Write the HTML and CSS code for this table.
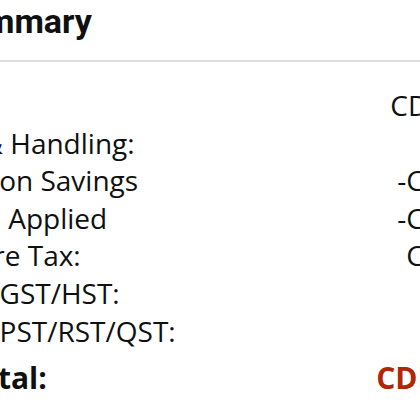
FILE: index.html
```html
<!DOCTYPE html>
<html lang="en">
<head>
<meta charset="utf-8">
<title>Order Summary</title>
<link rel="stylesheet" href="styles.css">
</head>
<body>
<section class="summary">
  <h2 class="title">Order Summary</h2>
  <div class="rows">
    <div class="row"><span class="label">Items:</span><span class="value">CDN$ 17.97</span></div>
    <div class="row"><span class="label">Shipping &amp; Handling:</span><span class="value">FREE</span></div>
    <div class="row"><span class="label">Your Coupon Savings</span><span class="value">-CDN$ 5.00</span></div>
    <div class="row"><span class="label">Promotion Applied</span><span class="value">-CDN$ 3.00</span></div>
    <div class="row"><span class="label">Total before Tax:</span><span class="value">CDN$ 9.97</span></div>
    <div class="row"><span class="label">Estimated GST/HST:</span><span class="value">$1.30</span></div>
    <div class="row"><span class="label">Estimated PST/RST/QST:</span><span class="value">$0.00</span></div>
    <div class="row total"><span class="label">Grand Total:</span><span class="value">CDN$ 11.27</span></div>
  </div>
</section>
</body>
</html>
```
FILE: styles.css
```css
html, body {
  margin: 0;
  padding: 0;
  background: #ffffff;
}
body {
  width: 420px;
  height: 420px;
  overflow: hidden;
  font-family: "Open Sans", "Liberation Sans", sans-serif;
  color: #0f1111;
}
.summary {
  width: 710px;
  margin-left: -166px;
}
.title {
  margin: 0;
  padding: 1px 0 19px 17px;
  font-family: Roboto, "Open Sans", sans-serif;
  font-size: 34px;
  font-weight: 700;
  line-height: 40px;
  border-bottom: 2px solid #dddddd;
}
.rows {
  padding: 25px 0 0 28px;
  display: flex;
  flex-direction: column;
}
.row {
  display: flex;
  justify-content: space-between;
  font-size: 28px;
  line-height: 37.6px;
  white-space: nowrap;
}
.total {
  margin-top: 8px;
  font-size: 30px;
  line-height: 40px;
  font-weight: 700;
}
.total .value {
  color: #b12704;
}
```
